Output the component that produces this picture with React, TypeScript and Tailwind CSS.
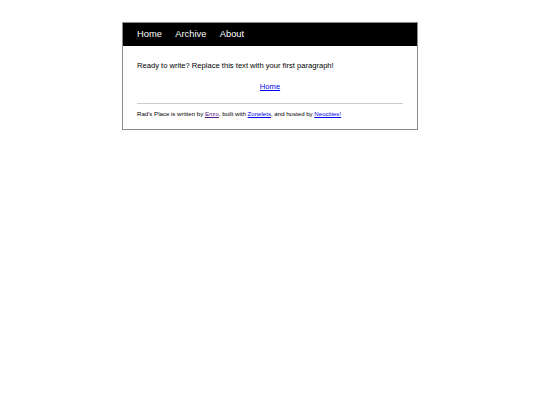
export default function App() {
  return (
    <div className="min-h-[405px] bg-white pt-[22px] font-['Liberation_Sans',Arial,sans-serif] text-black">
      <div className="mx-auto w-[296px] border border-[#8c8c8c]">
        {/* Nav bar */}
        <nav className="flex h-[23px] items-center gap-[13.5px] bg-black px-[14px] text-[9.3px] text-white">
          <a href="#">Home</a>
          <a href="#">Archive</a>
          <a href="#">About</a>
        </nav>

        <main className="px-[14px] pt-[15px] pb-[12px]">
          <p className="text-[7.6px] leading-[9px]">
            Ready to write? Replace this text with your first paragraph!
          </p>
          <p className="mt-[12px] text-center text-[7.6px] leading-[9px]">
            <a href="#" className="text-[#0000ee] underline">Home</a>
          </p>

          <hr className="mt-[12px] border-t border-[#cccccc]" />

          <footer className="mt-[6px] text-[6.1px] leading-[7px]">
            Rad's Place is written by{' '}
            <a href="#" className="text-[#551a8b] underline">Enzo</a>, built with{' '}
            <a href="#" className="text-[#0000ee] underline">Zonelets</a>, and hosted by{' '}
            <a href="#" className="text-[#0000ee] underline">Neocities!</a>
          </footer>
        </main>
      </div>
    </div>
  )
}
